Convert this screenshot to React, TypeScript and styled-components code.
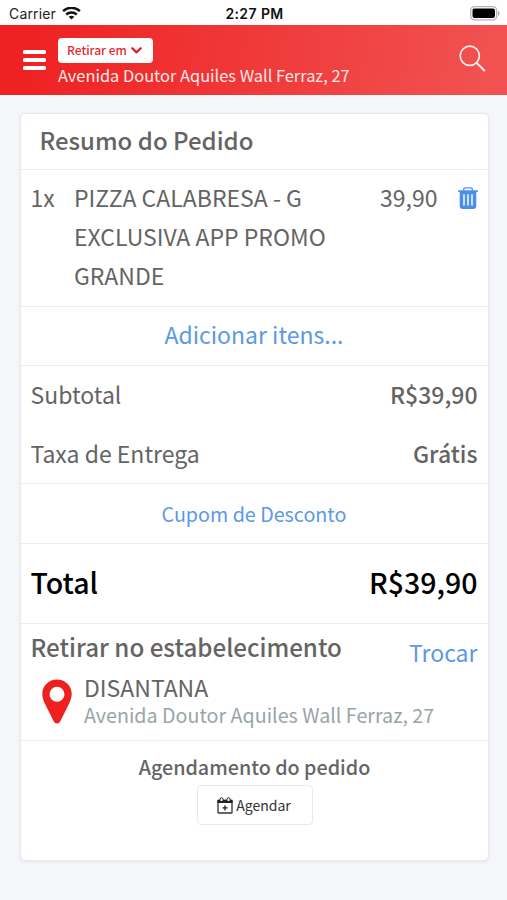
import React from "react";
import styled, { createGlobalStyle } from "styled-components";

const Global = createGlobalStyle`
  * { box-sizing: border-box; }
  body {
    margin: 0;
    background: #f4f6fa;
    font-family: "Noto Sans CJK SC", "Noto Sans", sans-serif;
    color: #646464;
  }
  button { font: inherit; border: 0; padding: 0; margin: 0; background: none; cursor: pointer; }
  svg { display: block; flex: none; }
`;

const Screen = styled.div`
  width: 507px;
  height: 900px;
  overflow: hidden;
  background: #f4f6fa;
`;

const StatusBar = styled.div`
  height: 25px;
  padding: 2px 7px 0 9px;
  display: grid;
  grid-template-columns: 1fr auto 1fr;
  align-items: center;
  background: #fff;
  color: #222;
  font: 400 14px/22px Inter, sans-serif;
`;

const Carrier = styled.div`
  display: flex;
  align-items: center;
  gap: 6px;
  letter-spacing: 0.15px;
`;

const Clock = styled.div`
  color: #111;
  font-weight: 600;
  letter-spacing: 0.4px;
`;

const Battery = styled.div`
  justify-self: end;
`;

const TopBar = styled.header`
  height: 70px;
  padding: 13px 21px 0 22.5px;
  display: flex;
  align-items: flex-start;
  background: linear-gradient(100deg, #ef2122 5%, #f15151 95%);
  color: #fff;
`;

const MenuButton = styled.button`
  width: 23px;
  margin: 12px 12.5px 0 0;
  display: grid;
  gap: 4px;
`;

const MenuLine = styled.span`
  height: 4px;
  border-radius: 1.5px;
  background: #fff;
`;

const Pickup = styled.div`
  flex: 1;
`;

const PickupButton = styled.button`
  width: 95px;
  height: 25px;
  padding: 0 0 1px 9px;
  display: flex;
  align-items: center;
  gap: 4px;
  border-radius: 4px;
  background: #fff;
  color: #e02d2f;
`;

const SearchButton = styled.button`
  margin-top: 7px;
`;

const Card = styled.main`
  width: 469px;
  height: 748px;
  margin: 18px 0 0 20px;
  border: 1px solid #e8e9eb;
  border-radius: 5px;
  background: #fff;
  box-shadow: 0 1px 3px rgba(60, 70, 90, 0.09);
`;

const Section = styled.section<{ $h: number }>`
  height: ${(p) => p.$h}px;
  padding: 0 10.5px 0 9.5px;
  border-bottom: 1px solid #ebecee;
  &:last-child { border-bottom: 0; }
`;

const Row = styled.div<{ $h: number; $center?: boolean }>`
  height: ${(p) => p.$h}px;
  display: flex;
  align-items: center;
  justify-content: ${(p) => (p.$center ? "center" : "space-between")};
`;

const Text = styled.span<{ $s: number; $b?: boolean; $c?: string; $lh?: number }>`
  display: block;
  white-space: pre-line;
  font-size: ${(p) => p.$s}px;
  font-weight: ${(p) => (p.$b ? 500 : 400)};
  line-height: ${(p) => p.$lh ?? 30}px;
  color: ${(p) => p.$c ?? "inherit"};
`;

const CardTitle = styled.h1`
  margin: 0;
  padding-left: 9px;
  height: 52px;
  display: flex;
  align-items: center;
`;

const Item = styled.div`
  padding-top: 8px;
  display: grid;
  grid-template-columns: 43.5px 1fr auto 40px;
`;

const TrashButton = styled.button`
  margin: 9px 0 0 20px;
  width: 20px;
  height: 22px;
`;

const PickupHead = styled.div`
  display: flex;
  justify-content: space-between;
  align-items: flex-start;
  padding-top: 8px;
  height: 49px;
`;

const Change = styled.button`
  margin-top: 5px;
`;

const Place = styled.div`
  display: flex;
  padding-left: 11.5px;
  gap: 12px;
`;

const PinBox = styled.div`
  padding-top: 6px;
`;

const Schedule = styled.div`
  padding: 11px 0 0 1px;
  display: flex;
  flex-direction: column;
  align-items: center;
  gap: 3px;
`;

const ScheduleButton = styled.button`
  width: 116px;
  height: 40px;
  display: flex;
  align-items: center;
  justify-content: center;
  gap: 3px;
  padding-right: 1px;
  border: 1px solid #e9e9e9;
  border-radius: 4px;
  color: #333;
`;

const blue = "#5c98e6";

const WifiIcon = () => (
  <svg width="19" height="14" viewBox="0 0 19 14" fill="none" stroke="#111" strokeWidth="2.5">
    <path d="M1.1 4.200C5.800-.3 13.200-.3 17.900 4.200" />
    <path d="M4.200 7.500c3-2.800 7.600-2.800 10.600 0" />
    <path d="M6.700 9.700c1.600-1.400 4-1.400 5.600 0L9.500 12.600z" fill="#111" stroke="none" />
  </svg>
);

const BatteryIcon = () => (
  <svg width="30" height="15" viewBox="0 0 30 15">
    <rect x=".7" y=".7" width="26" height="13.2" rx="3.8" fill="#fff" stroke="#b5b5b5" strokeWidth="1.3" />
    <rect x="2.5" y="2.5" width="22.5" height="9.6" rx="2" fill="#000" />
    <path d="M28 5c2 .6 2 4.200 0 4.800z" fill="#aaa" />
  </svg>
);

const ChevronIcon = () => (
  <svg width="11" height="8" viewBox="0 0 11 8" fill="none" stroke="#d6202a" strokeWidth="2.2" strokeLinecap="round" strokeLinejoin="round">
    <path d="M1.3 2.200 5.500 6.400 9.700 2.200" />
  </svg>
);

const SearchIcon = () => (
  <svg width="27" height="27" viewBox="0 0 27 27" fill="none" stroke="#ffe9e9" strokeWidth="1.7">
    <circle cx="10.800" cy="10.800" r="9.600" />
    <path d="m17.500 17.700 8.300 8.300" strokeWidth="2" />
  </svg>
);

const TrashIcon = () => (
  <svg width="20" height="22" viewBox="0 0 20 22">
    <path d="M5.600 3.600V2.800Q5.600.9 7.500.9h5q1.900 0 1.900 1.900v.8" fill="none" stroke="#4a90e8" strokeWidth="1.400" />
    <path d="M.2 3.200h19.600v1.800H18.300V19.600Q18.300 22 15.900 22H4.100Q1.700 22 1.700 19.600V5H.2z" fill="#4a90e8" />
    <path d="M6 7.300v11.200M10 7.300v11.200M14 7.300v11.200" stroke="#e4effd" strokeWidth="1.700" />
  </svg>
);

const PinIcon = () => (
  <svg width="30" height="45" viewBox="0 0 30 45">
    <path fillRule="evenodd" fill="#ee2020" d="M15 .5C6.700.5.300 6.800.300 14.800c0 5.500 2.500 9.800 5.500 15.700l5.900 11.700c1.400 3 5.200 3 6.600 0l5.900-11.700c3-5.900 5.500-10.200 5.500-15.700C29.700 6.800 23.300.5 15 .5zM15 7.700a7.500 7.500 0 1 1 0 15 7.500 7.500 0 0 1 0-15z" />
  </svg>
);

const CalendarIcon = () => (
  <svg width="16" height="17" viewBox="0 0 16 17">
    <rect x="1" y="3.500" width="14" height="12.500" rx=".6" fill="none" stroke="#333" strokeWidth="1.300" />
    <path d="M.5 2.800h15v3.200H.5z" fill="#222" />
    <path d="M3 4V2.200a1.500 1.500 0 0 1 3 0V4M10 4V2.200a1.500 1.500 0 0 1 3 0V4" fill="#fff" stroke="#222" strokeWidth="1" />
    <path d="M8 8.300v5.200M5.400 10.900h5.200" stroke="#222" strokeWidth="1.300" />
  </svg>
);

export default function App() {
  return (
    <Screen>
      <Global />
      <StatusBar>
        <Carrier>Carrier <WifiIcon /></Carrier>
        <Clock>2:27 PM</Clock>
        <Battery><BatteryIcon /></Battery>
      </StatusBar>
      <TopBar>
        <MenuButton aria-label="Menu"><MenuLine /><MenuLine /><MenuLine /></MenuButton>
        <Pickup>
          <PickupButton>
            <Text $s={12} $b $lh={24}>Retirar em</Text>
            <ChevronIcon />
          </PickupButton>
          <Text $s={16.4} $lh={24} $c="#ffe9e9">Avenida Doutor Aquiles Wall Ferraz, 27</Text>
        </Pickup>
        <SearchButton aria-label="Buscar"><SearchIcon /></SearchButton>
      </TopBar>
      <Card>
        <Section $h={56}>
          <CardTitle><Text $s={24} $b>Resumo do Pedido</Text></CardTitle>
        </Section>
        <Section $h={137}>
          <Item>
            <Text $s={23} $lh={39}>1x</Text>
            <Text $s={23} $lh={39}>{"PIZZA CALABRESA - G\nEXCLUSIVA APP PROMO\nGRANDE"}</Text>
            <Text $s={23} $lh={39}>39,90</Text>
            <TrashButton aria-label="Remover"><TrashIcon /></TrashButton>
          </Item>
        </Section>
        <Section $h={59}>
          <Row $h={54} $center><Text $s={23} $c={blue}>Adicionar itens...</Text></Row>
        </Section>
        <Section $h={118}>
          <Row $h={56}><Text $s={23}>Subtotal</Text><Text $s={23} $b>R$39,90</Text></Row>
          <Row $h={61}><Text $s={23}>Taxa de Entrega</Text><Text $s={23} $b>Grátis</Text></Row>
        </Section>
        <Section $h={60}>
          <Row $h={60} $center><Text $s={19.7} $c={blue}>Cupom de Desconto</Text></Row>
        </Section>
        <Section $h={80}>
          <Row $h={76}><Text $s={28.5} $b $c="#000">Total</Text><Text $s={28.5} $b $c="#000">R$39,90</Text></Row>
        </Section>
        <Section $h={117}>
          <PickupHead>
            <Text $s={24.15} $b>Retirar no estabelecimento</Text>
            <Change><Text $s={23} $c={blue}>Trocar</Text></Change>
          </PickupHead>
          <Place>
            <PinBox><PinIcon /></PinBox>
            <div>
              <Text $s={23} $lh={28}>DISANTANA</Text>
              <Text $s={19.7} $lh={28} $c="#98a5a8">Avenida Doutor Aquiles Wall Ferraz, 27</Text>
            </div>
          </Place>
        </Section>
        <Section $h={119}>
          <Schedule>
            <Text $s={19.7} $b>Agendamento do pedido</Text>
            <ScheduleButton><CalendarIcon /><Text $s={14}>Agendar</Text></ScheduleButton>
          </Schedule>
        </Section>
      </Card>
    </Screen>
  );
}
